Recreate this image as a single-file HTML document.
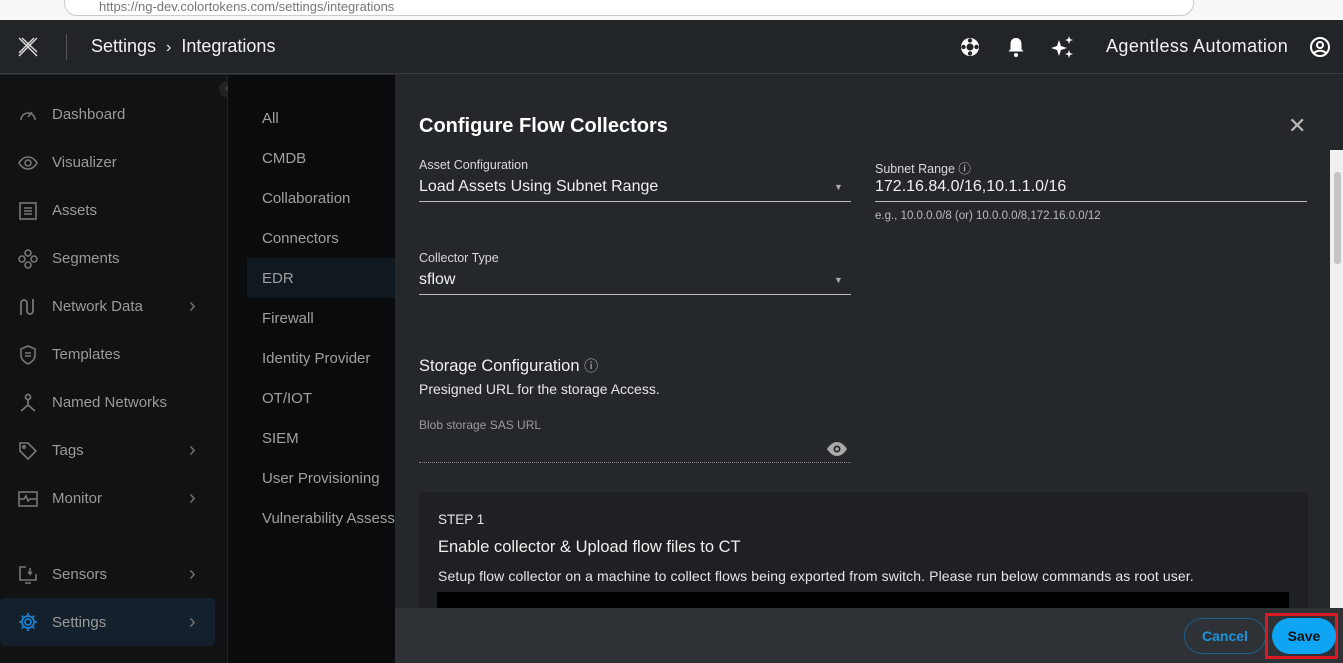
<!DOCTYPE html>
<html><head><style>
*{margin:0;padding:0;box-sizing:border-box}
body{width:1343px;height:663px;overflow:hidden;background:#25282b;font-family:"Liberation Sans",sans-serif;color:#e8e8e8;position:relative}
.abs{position:absolute}
.chrome{left:0;top:0;width:1343px;height:20px;background:#f7f7f7}
.url{left:64px;top:-10px;width:1130px;height:26px;border:1px solid #ccc;border-radius:13px;background:#fff;font-size:13px;color:#777;padding:8px 0 0 34px}
.hdr{left:0;top:20px;width:1343px;height:54px;background:#222528;border-bottom:1px solid #3a3d40}
.side{left:0;top:75px;width:228px;height:588px;background:#111214;border-right:1px solid #222}
.sub{left:228px;top:75px;width:167px;height:588px;background:#0a0b0d}
.nav{position:absolute;left:52px;font-size:15px;color:#9a9a9a}
.ic{position:absolute;left:18px;width:20px;height:20px}
.chev{position:absolute;left:189px;font-size:20px;color:#777;line-height:18px}
.sn{position:absolute;left:262px;font-size:15px;color:#a0a0a0}
.lbl{font-size:12.5px;color:#d8d8d8}
.val{font-size:16px;color:#f0f0f0}
.line{height:1px;background:#bbb}
</style></head><body>
<div class="abs chrome"></div>
<div class="abs url">https://ng-dev.colortokens.com/settings/integrations</div>
<div class="abs hdr">
 <svg class="abs" style="left:17px;top:16px" width="22" height="22" viewBox="0 0 22 22" stroke="#ddd" stroke-width="1.4" fill="none"><path d="M2 2L20 20M20 2L2 20M5 2L20 16M17 2 2 17"/></svg>
 <div class="abs" style="left:66px;top:14px;width:1px;height:26px;background:#555"></div>
 <div class="abs" style="left:91px;top:16px;font-size:18px;color:#f2f2f2">Settings &nbsp;<span style="font-size:16px">›</span>&nbsp; Integrations</div>
 <svg class="abs" style="left:959px;top:16px" width="22" height="22" viewBox="0 0 22 22"><circle cx="11" cy="11" r="9" fill="#fff"/><circle cx="11" cy="11" r="3.5" fill="#222528"/><circle cx="11" cy="4.5" r="2.2" fill="#222528"/><circle cx="11" cy="17.5" r="2.2" fill="#222528"/><circle cx="4.5" cy="11" r="2.2" fill="#222528"/><circle cx="17.5" cy="11" r="2.2" fill="#222528"/></svg>
 <svg class="abs" style="left:1006px;top:16px" width="20" height="22" viewBox="0 0 20 22"><path d="M10 2c-4 0-5.5 3-5.5 6v5l-2 2.5h15l-2-2.5V8c0-3-1.5-6-5.5-6z" fill="#fff"/><circle cx="10" cy="19" r="2" fill="#fff"/></svg>
 <svg class="abs" style="left:1050px;top:15px" width="26" height="24" viewBox="0 0 26 24" fill="#fff"><path d="M9 5l2 6 6 2-6 2-2 6-2-6-6-2 6-2z"/><path d="M19 1l1 3 3 1-3 1-1 3-1-3-3-1 3-1z"/><path d="M19 15l1 3 3 1-3 1-1 3-1-3-3-1 3-1z"/></svg>
 <div class="abs" style="left:1106px;top:16px;font-size:18px;color:#f2f2f2;letter-spacing:0.4px">Agentless Automation</div>
 <svg class="abs" style="left:1309px;top:16px" width="22" height="22" viewBox="0 0 22 22" fill="none" stroke="#fff" stroke-width="2"><circle cx="11" cy="11" r="9"/><circle cx="11" cy="9" r="3"/><path d="M5 17c3-3 9-3 12 0"/></svg>
</div>
<div class="abs side">
 <div class="abs" style="left:219px;top:6px;width:16px;height:16px;border-radius:8px;background:#222;color:#666;font-size:10px;text-align:center;line-height:15px">‹</div>
 <svg class="ic" style="top:30px" viewBox="0 0 20 20" fill="none" stroke="#777" stroke-width="1.6"><path d="M3 15a7 7 0 1 1 14 0M10 12l4-5"/></svg><div class="nav" style="top:31px">Dashboard</div>
 <svg class="ic" style="top:78px" viewBox="0 0 20 20" fill="none" stroke="#777" stroke-width="1.6"><path d="M1 10s3-6 9-6 9 6 9 6-3 6-9 6-9-6-9-6z"/><circle cx="10" cy="10" r="3"/></svg><div class="nav" style="top:79px">Visualizer</div>
 <svg class="ic" style="top:126px" viewBox="0 0 20 20" fill="none" stroke="#777" stroke-width="1.6"><rect x="2" y="2" width="16" height="16"/><path d="M6 7h8M6 10h8M6 13h8"/></svg><div class="nav" style="top:127px">Assets</div>
 <svg class="ic" style="top:174px" viewBox="0 0 20 20" fill="none" stroke="#777" stroke-width="1.6"><circle cx="10" cy="4" r="3"/><circle cx="10" cy="16" r="3"/><circle cx="4" cy="10" r="3"/><circle cx="16" cy="10" r="3"/></svg><div class="nav" style="top:175px">Segments</div>
 <svg class="ic" style="top:222px" viewBox="0 0 20 20" fill="none" stroke="#777" stroke-width="1.8"><path d="M3 18V6a3 3 0 0 1 6 0v8a3 3 0 0 0 6 0V2"/></svg><div class="nav" style="top:223px">Network Data</div><div class="chev" style="top:222px">›</div>
 <svg class="ic" style="top:270px" viewBox="0 0 20 20" fill="none" stroke="#777" stroke-width="1.6"><path d="M10 1l7 3v6c0 4-3 7-7 9-4-2-7-5-7-9V4z M7 8h6M7 11h6"/></svg><div class="nav" style="top:271px">Templates</div>
 <svg class="ic" style="top:318px" viewBox="0 0 20 20" fill="none" stroke="#777" stroke-width="1.8"><circle cx="10" cy="4" r="2.5"/><path d="M10 7v5L3 18M10 12l7 6"/></svg><div class="nav" style="top:319px">Named Networks</div>
 <svg class="ic" style="top:366px" viewBox="0 0 20 20" fill="none" stroke="#777" stroke-width="1.6"><path d="M2 2h8l8 8-8 8-8-8z"/><circle cx="6" cy="6" r="1.2"/></svg><div class="nav" style="top:367px">Tags</div><div class="chev" style="top:366px">›</div>
 <svg class="ic" style="top:414px" viewBox="0 0 20 20" fill="none" stroke="#777" stroke-width="1.6"><rect x="1" y="3" width="18" height="14"/><path d="M1 10h5l2-3 2 5 2-2h7"/></svg><div class="nav" style="top:415px">Monitor</div><div class="chev" style="top:414px">›</div>
 <svg class="ic" style="top:490px" viewBox="0 0 20 20" fill="none" stroke="#777" stroke-width="1.6"><path d="M8 2H2v13h16V9M12 3v6l-2-2M12 9l2-2M7 18h6"/></svg><div class="nav" style="top:491px">Sensors</div><div class="chev" style="top:490px">›</div>
 <div class="abs" style="left:0;top:523px;width:215px;height:48px;background:#14202b;border-radius:4px"></div>
 <svg class="ic" style="top:537px" viewBox="0 0 20 20" fill="none" stroke="#1a7fd0" stroke-width="1.8"><circle cx="10" cy="10" r="3"/><path d="M10 1v3M10 16v3M1 10h3M16 10h3M3.6 3.6l2.1 2.1M14.3 14.3l2.1 2.1M3.6 16.4l2.1-2.1M14.3 5.7l2.1-2.1"/><circle cx="10" cy="10" r="6"/></svg><div class="nav" style="top:539px">Settings</div><div class="chev" style="top:538px">›</div>
</div>
<div class="abs sub"></div>
<div class="abs" style="left:247px;top:258px;width:148px;height:40px;background:#101820"></div>
<div class="sn" style="top:110px">All</div>
<div class="sn" style="top:150px">CMDB</div>
<div class="sn" style="top:190px">Collaboration</div>
<div class="sn" style="top:230px">Connectors</div>
<div class="sn" style="top:270px">EDR</div>
<div class="sn" style="top:310px">Firewall</div>
<div class="sn" style="top:350px">Identity Provider</div>
<div class="sn" style="top:390px">OT/IOT</div>
<div class="sn" style="top:430px">SIEM</div>
<div class="sn" style="top:470px">User Provisioning</div>
<div class="sn" style="top:510px;width:133px;white-space:nowrap;overflow:hidden">Vulnerability Assessment</div>

<div class="abs" style="left:419px;top:115px;font-size:20px;font-weight:bold;color:#fff">Configure Flow Collectors</div>
<div class="abs" style="left:1288px;top:114px;font-size:22px;color:#bbb;line-height:24px">✕</div>
<div class="abs lbl" style="left:419px;top:158px">Asset Configuration</div>
<div class="abs val" style="left:419px;top:178px">Load Assets Using Subnet Range</div>
<div class="abs" style="left:834px;top:182px;font-size:9px;color:#aaa">▼</div>
<div class="abs line" style="left:419px;top:201px;width:432px"></div>
<div class="abs lbl" style="left:875px;top:158px">Subnet Range ⓘ</div>
<div class="abs val" style="left:875px;top:178px">172.16.84.0/16,10.1.1.0/16</div>
<div class="abs line" style="left:875px;top:201px;width:432px"></div>
<div class="abs" style="left:875px;top:210px;font-size:11.5px;color:#bbb">e.g., 10.0.0.0/8 (or) 10.0.0.0/8,172.16.0.0/12</div>
<div class="abs lbl" style="left:419px;top:251px">Collector Type</div>
<div class="abs val" style="left:419px;top:271px">sflow</div>
<div class="abs" style="left:834px;top:275px;font-size:9px;color:#aaa">▼</div>
<div class="abs line" style="left:419px;top:294px;width:432px"></div>
<div class="abs" style="left:419px;top:356px;font-size:16.5px;color:#f0f0f0">Storage Configuration <span style="font-size:14px;color:#bbb">ⓘ</span></div>
<div class="abs" style="left:419px;top:381px;font-size:14px;color:#e6e6e6">Presigned URL for the storage Access.</div>
<div class="abs" style="left:419px;top:418px;font-size:12px;color:#9a9a9a">Blob storage SAS URL</div>
<svg class="abs" style="left:826px;top:441px" width="22" height="16" viewBox="0 0 22 16"><path d="M1 8s4-7 10-7 10 7 10 7-4 7-10 7S1 8 1 8z" fill="#aaa"/><circle cx="11" cy="8" r="3.5" fill="#25282b"/><circle cx="11" cy="8" r="1.8" fill="#aaa"/></svg>
<div class="abs" style="left:419px;top:462px;width:432px;border-top:1px dotted #888"></div>
<div class="abs" style="left:419px;top:492px;width:889px;height:120px;background:#1e2023;border-radius:6px"></div>
<div class="abs" style="left:438px;top:512px;font-size:13.5px;color:#e6e6e6">STEP 1</div>
<div class="abs" style="left:438px;top:538px;font-size:16.5px;color:#f0f0f0">Enable collector &amp; Upload flow files to CT</div>
<div class="abs" style="left:438px;top:568px;font-size:14px;color:#e6e6e6;letter-spacing:0.1px">Setup flow collector on a machine to collect flows being exported from switch. Please run below commands as root user.</div>
<div class="abs" style="left:437px;top:592px;width:852px;height:20px;background:#000"></div>
<div class="abs" style="left:1330px;top:150px;width:13px;height:458px;background:#f0f0f0"></div>
<div class="abs" style="left:1334px;top:172px;width:7px;height:92px;background:#c4c4c4;border-radius:3px"></div>
<div class="abs" style="left:395px;top:608px;width:948px;height:55px;background:#2e3135"></div>
<div class="abs" style="left:1184px;top:618px;width:82px;height:36px;border:1px solid #1c5f8a;border-radius:18px;color:#1a96e0;font-weight:bold;font-size:14px;text-align:center;line-height:34px">Cancel</div>
<div class="abs" style="left:1265px;top:613px;width:73px;height:46px;border:3px solid #d81b22"></div>
<div class="abs" style="left:1272px;top:618px;width:64px;height:36px;background:#0ea5f5;border-radius:18px;color:#101010;font-weight:bold;font-size:14px;text-align:center;line-height:36px">Save</div>
</body></html>
